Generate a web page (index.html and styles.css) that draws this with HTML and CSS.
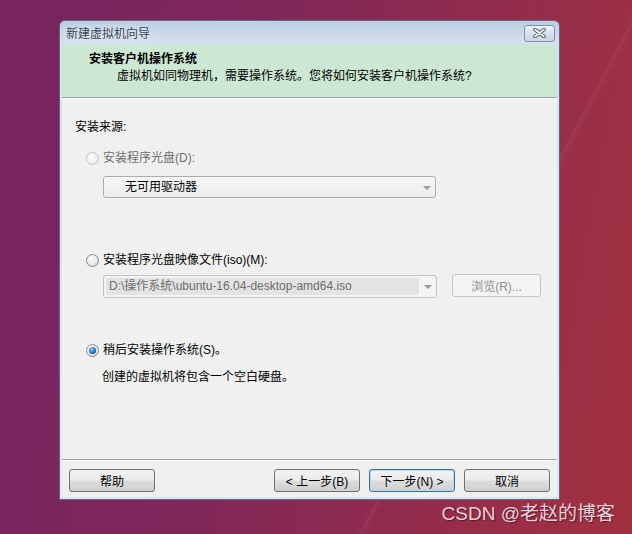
FILE: index.html
```html
<!DOCTYPE html>
<html lang="zh-CN">
<head>
    <meta charset="UTF-8">
    <meta name="viewport" content="width=device-width, initial-scale=1.0">
    <title>新建虚拟机向导</title>
    <link rel="stylesheet" href="styles.css">
</head>
<body>

<div class="window">
    <div class="titlebar">
        <span class="titlebar-text">新建虚拟机向导</span>
        <button class="close-btn" aria-label="关闭">
            <svg width="13" height="10" viewBox="0 0 13 10">
                <path d="M2 1.5 L11 8.5 M11 1.5 L2 8.5" stroke="#4f5d70" stroke-width="3.6" stroke-linecap="round"/>
                <path d="M2 1.5 L11 8.5 M11 1.5 L2 8.5" stroke="#ffffff" stroke-width="1.6" stroke-linecap="round"/>
            </svg>
        </button>
    </div>

    <div class="client">
        <div class="header">
            <div class="header-title">安装客户机操作系统</div>
            <div class="header-desc">虚拟机如同物理机，需要操作系统。您将如何安装客户机操作系统?</div>
        </div>

        <div class="content">
            <div class="label">安装来源:</div>

            <div class="option disabled option-disc">
                <span class="radio"></span>安装程序光盘(D):
            </div>
            <div class="combo combo-drive">
                <span class="combo-text">无可用驱动器</span>
                <span class="arrow"></span>
            </div>

            <div class="option option-iso">
                <span class="radio"></span>安装程序光盘映像文件(iso)(M):
            </div>
            <div class="iso-row">
                <div class="combo combo-iso">
                    <span class="combo-select">D:\操作系统\ubuntu-16.04-desktop-amd64.iso</span>
                    <span class="arrow"></span>
                </div>
                <button class="browse-btn" disabled>浏览(R)...</button>
            </div>

            <div class="option option-later">
                <span class="radio checked"></span>稍后安装操作系统(S)。
            </div>
            <div class="hint">创建的虚拟机将包含一个空白硬盘。</div>
        </div>

        <div class="footer">
            <button class="btn">帮助</button>
            <div class="footer-right">
                <button class="btn">&lt; 上一步(B)</button>
                <button class="btn btn-default">下一步(N) &gt;</button>
                <button class="btn">取消</button>
            </div>
        </div>
    </div>
</div>

<div class="watermark">CSDN @老赵的博客</div>

</body>
</html>
```

FILE: styles.css
```css
body {
    margin: 0;
    width: 632px;
    height: 534px;
    overflow: hidden;
    background:
        linear-gradient(118deg, transparent 70%, rgba(255, 255, 255, 0.05) 70.3%, transparent 71%),
        linear-gradient(100deg, #77245f 0%, #7e275b 35%, #932c4c 70%, #a2313f 100%);
    font-family: "Liberation Sans", "Noto Sans CJK SC", sans-serif;
    font-size: 12px;
    color: #000;
}

button {
    font-family: inherit;
    font-size: 12px;
    padding: 0;
}

.window {
    margin: 20px 0 0 59px;
    width: 501px;
    height: 480px;
    box-sizing: border-box;
    border: 1px solid #5b6a7e;
    border-radius: 6px 6px 0 0;
    background: linear-gradient(#bccee2, #d6e2f0 23px, #dbe6f3);
    padding: 0 2px 2px;
    display: flex;
    flex-direction: column;
}

.titlebar {
    height: 23px;
    display: flex;
    align-items: center;
    justify-content: space-between;
    padding-left: 4px;
}

.titlebar-text {
    color: #3b4452;
    text-shadow: 0 0 6px rgba(255, 255, 255, 0.9);
}

.close-btn {
    width: 31px;
    height: 17px;
    margin-right: 2px;
    margin-top: 1px;
    border: 1px solid #7f8fa5;
    border-radius: 3px;
    background: linear-gradient(#eef3f8, #d6e1ec 50%, #c9d6e4);
    display: flex;
    align-items: center;
    justify-content: center;
}

.client {
    flex: 1;
    background: #f0f0f0;
    display: flex;
    flex-direction: column;
}

.header {
    height: 54px;
    box-sizing: border-box;
    background: #cce8d2;
    border-bottom: 1px solid #a0a0a0;
    box-shadow: 0 1px 0 #ffffff;
    padding: 7px 0 0 27px;
    line-height: 16px;
}

.header-title {
    font-weight: bold;
}

.header-desc {
    margin-top: 1px;
    padding-left: 28px;
}

.content {
    flex: 1;
    padding-top: 21px;
    line-height: 16px;
}

.label {
    padding-left: 13px;
}

.option {
    display: flex;
    align-items: center;
    padding-left: 24px;
    height: 16px;
}

.option-disc {
    margin-top: 15px;
}

.option-iso {
    margin-top: 54px;
}

.option-later {
    margin-top: 44px;
}

.disabled {
    color: #6d6d6d;
}

.radio {
    width: 11px;
    height: 11px;
    border-radius: 50%;
    border: 1px solid #8a8a8a;
    background: radial-gradient(circle at 40% 35%, #ffffff, #dcdcdc 80%);
    margin-right: 4px;
    flex-shrink: 0;
    position: relative;
}

.disabled .radio {
    border-color: #c4c4c4;
    background: radial-gradient(circle at 40% 35%, #ffffff, #e8e8e8 80%);
}

.radio.checked::after {
    content: "";
    position: absolute;
    left: 2px;
    top: 2px;
    width: 7px;
    height: 7px;
    border-radius: 50%;
    background: radial-gradient(circle at 40% 35%, #8fd0f5, #1a69b0 60%, #0d3f78);
}

.combo {
    box-sizing: border-box;
    border: 1px solid #acacac;
    border-radius: 3px;
    background: linear-gradient(#f6f6f6, #ececec);
    display: flex;
    align-items: center;
    position: relative;
}

.combo-drive {
    margin: 10px 0 0 41px;
    width: 333px;
    height: 22px;
    padding-left: 21px;
}

.arrow {
    position: absolute;
    right: 4px;
    top: 9px;
    border-left: 4px solid transparent;
    border-right: 4px solid transparent;
    border-top: 4px solid #9a9a9a;
}

.iso-row {
    display: flex;
    align-items: flex-start;
    margin: 7px 0 0 41px;
}

.combo-iso {
    width: 334px;
    height: 23px;
    border-color: #c5c5c5;
    background: #f4f4f4;
    padding: 2px;
}

.combo-select {
    width: 313px;
    height: 17px;
    box-sizing: border-box;
    background: #e3e3e3;
    color: #6d6d6d;
    padding-left: 3px;
    line-height: 17px;
    white-space: nowrap;
}

.browse-btn {
    margin: -1px 0 0 15px;
    width: 89px;
    height: 23px;
    border: 1px solid #c5c5c5;
    border-radius: 3px;
    background: #f4f4f4;
    color: #8d8d8d;
}

.hint {
    margin-top: 11px;
    padding-left: 40px;
}

.footer {
    height: 38px;
    box-sizing: border-box;
    border-top: 1px solid #a0a0a0;
    box-shadow: inset 0 1px 0 #ffffff;
    padding: 9px 7px 0;
    display: flex;
    justify-content: space-between;
    align-items: flex-start;
}

.footer-right {
    display: flex;
    gap: 9px;
}

.btn {
    width: 86px;
    height: 23px;
    border: 1px solid #707070;
    border-radius: 3px;
    background: linear-gradient(#f2f2f2, #ebebeb 48%, #dddddd 52%, #cfcfcf);
    color: #000;
}

.btn-default {
    border-color: #3c6f96;
    box-shadow: inset 0 0 0 1px #b5dcf2;
}

.watermark {
    text-align: right;
    padding: 2px 17px 0 0;
    font-size: 19px;
    line-height: 24px;
    color: #e3d3dc;
    text-shadow: 1px 1px 1px rgba(40, 0, 20, 0.5);
}
```
